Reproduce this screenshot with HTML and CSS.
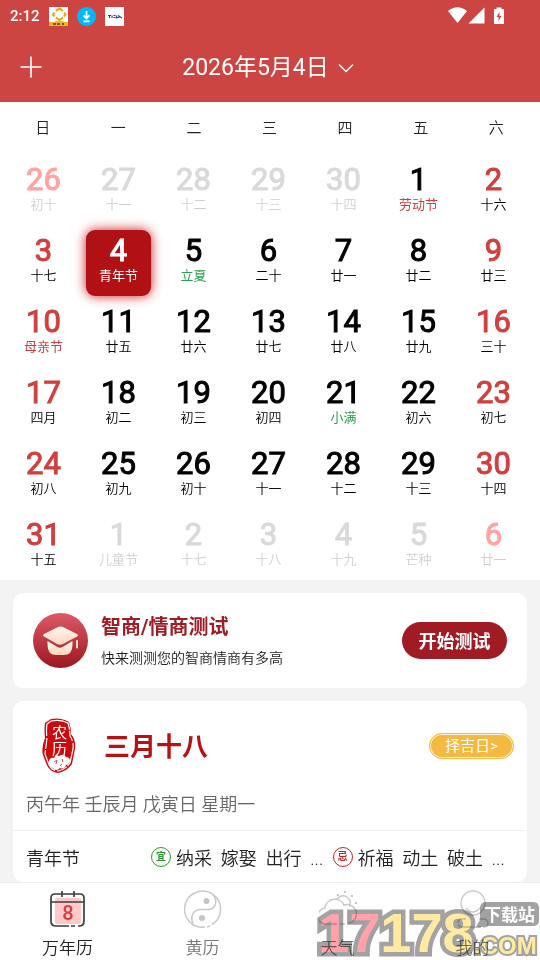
FILE: index.html
```html
<!DOCTYPE html>
<html lang="zh-CN">
<head>
<meta charset="utf-8">
<meta name="viewport" content="width=device-width, initial-scale=1">
<title>万年历</title>
<link rel="stylesheet" href="styles.css">
</head>
<body>
<div class="app">
  <header class="header">
    <div class="status">
      <span class="clock">2:12</span>
      <svg class="tray" viewBox="0 0 19 19"><rect width="19" height="19" fill="#fff"/><path d="M0 15h5l2-1h6l2 1h4v4H0z" fill="#f5b50a"/><path d="M7 4l3.500-2.500L14 4M5.500 5.500L4 7.500l1.500 2M15 5.500l1.500 2-1.500 2M7 10.500l3.500 2.500 3.500-2.500" fill="none" stroke="#eda20c" stroke-width="2"/><path d="M4 17h3M8 17h3M13 17h2" stroke="#4a3606" stroke-width="1.500"/></svg>
      <svg class="tray" viewBox="0 0 19 19"><circle cx="9.500" cy="9.500" r="9.500" fill="#00b8fb"/><path d="M9.500 4v7M6.500 8.500l3 3 3-3M6.500 14.300h6" fill="none" stroke="#fff" stroke-width="1.800"/></svg>
      <svg class="tray" viewBox="0 0 19 19"><rect width="19" height="19" fill="#fff"/><path d="M3 8.500h3M4.500 8.500v2.500M7 8.500v2.500M8.500 8.500h2M8.500 10.500h2M11.500 8.500v2.500l3-1M13 8.500l4 2.500" fill="none" stroke="#24467e" stroke-width="1.100"/></svg>
      <svg class="signals" viewBox="0 0 60 18"><path d="M0 4Q9.500-3.500 19 4L9.500 16zM20.500 16.500L36.500.5v16z" fill="#fff"/><path d="M46 2h2.500V.5h5V2H56v15H46z" fill="#fff"/><path d="M51.500 5l-3 5h2v4l3-5h-2z" fill="#cc4542"/></svg>
    </div>
    <div class="titlebar">
      <button class="add" type="button" aria-label="添加"><svg viewBox="0 0 22 22"><path d="M11 .5v21M.5 11h21" stroke="#fff" stroke-width="1.700"/></svg></button>
      <button class="month" type="button">2026年5月4日<svg viewBox="0 0 16 10"><path d="M1 1.500l7 7 7-7" fill="none" stroke="#fff" stroke-width="1.500"/></svg></button>
    </div>
  </header>
  <main>
    <section class="calendar">
      <div class="week"><span>日</span><span>一</span><span>二</span><span>三</span><span>四</span><span>五</span><span>六</span></div>
      <div class="days">
        <button class="day rest out"><b>26</b><span>初十</span></button><button class="day out"><b>27</b><span>十一</span></button><button class="day out"><b>28</b><span>十二</span></button><button class="day out"><b>29</b><span>十三</span></button><button class="day out"><b>30</b><span>十四</span></button><button class="day fest"><b>1</b><span>劳动节</span></button><button class="day rest"><b>2</b><span>十六</span></button>
        <button class="day rest"><b>3</b><span>十七</span></button><button class="day selected" aria-pressed="true"><b>4</b><span>青年节</span></button><button class="day term"><b>5</b><span>立夏</span></button><button class="day"><b>6</b><span>二十</span></button><button class="day"><b>7</b><span>廿一</span></button><button class="day"><b>8</b><span>廿二</span></button><button class="day rest"><b>9</b><span>廿三</span></button>
        <button class="day rest fest"><b>10</b><span>母亲节</span></button><button class="day"><b>11</b><span>廿五</span></button><button class="day"><b>12</b><span>廿六</span></button><button class="day"><b>13</b><span>廿七</span></button><button class="day"><b>14</b><span>廿八</span></button><button class="day"><b>15</b><span>廿九</span></button><button class="day rest"><b>16</b><span>三十</span></button>
        <button class="day rest"><b>17</b><span>四月</span></button><button class="day"><b>18</b><span>初二</span></button><button class="day"><b>19</b><span>初三</span></button><button class="day"><b>20</b><span>初四</span></button><button class="day term"><b>21</b><span>小满</span></button><button class="day"><b>22</b><span>初六</span></button><button class="day rest"><b>23</b><span>初七</span></button>
        <button class="day rest"><b>24</b><span>初八</span></button><button class="day"><b>25</b><span>初九</span></button><button class="day"><b>26</b><span>初十</span></button><button class="day"><b>27</b><span>十一</span></button><button class="day"><b>28</b><span>十二</span></button><button class="day"><b>29</b><span>十三</span></button><button class="day rest"><b>30</b><span>十四</span></button>
        <button class="day rest"><b>31</b><span>十五</span></button><button class="day out"><b>1</b><span>儿童节</span></button><button class="day out"><b>2</b><span>十七</span></button><button class="day out"><b>3</b><span>十八</span></button><button class="day out"><b>4</b><span>十九</span></button><button class="day out"><b>5</b><span>芒种</span></button><button class="day rest out"><b>6</b><span>廿一</span></button>
      </div>
    </section>
    <div class="feed">
      <section class="card quiz">
        <svg class="cap" viewBox="0 0 55 55"><defs><linearGradient id="disc" x2="0" y2="1"><stop stop-color="#dd5b66"/><stop offset="1" stop-color="#9b1620"/></linearGradient><linearGradient id="cream" x2="0" y2="1"><stop stop-color="#fff8f2"/><stop offset="1" stop-color="#ffd5ba"/></linearGradient></defs><circle cx="27.500" cy="27.500" r="27.500" fill="url(#disc)"/><path d="M14.500 28v4q0 10 9 10h7q9 0 9-10v-4l-10 6q-2.500 1.500-5 0z" fill="url(#cream)"/><path d="M11 21L25 14q2.500-1 5 0l14 7q2 1 0 2.500L30 31q-3 1.500-6 0l-13-7.500q-2-1.500 0-2.500z" fill="url(#cream)"/><path d="M44 28v6.500" stroke="#ffe0cb" stroke-width="2" stroke-linecap="round"/></svg>
        <div class="quiz-text"><h2>智商/情商测试</h2><p>快来测测您的智商情商有多高</p></div>
        <button class="start" type="button">开始测试</button>
      </section>
      <section class="card almanac">
        <div class="lunar">
          <svg class="stamp" viewBox="0 0 34 56"><path d="M9 1Q19-1 27 4q2 5 2 12 5 6 4 15l-3 15q-6 8-14 9-9-1-12-10l-3-8Q-1 30 3 20 2 12 3 5z" fill="#cc0a0d"/><path d="M9 3Q19 1 26 5q2 7 2 13 4 6 3 13l-3 14q-5 7-12 8-8-1-10-9l-3-8 2-16q-1-8 0-14z" fill="none" stroke="#fff" stroke-width="1.200" stroke-dasharray="24 1 11 2"/><path d="M7 43q1-4 5-3 1-4 5-2 5-3 7 1 4 0 4 4-1 4-4 4-2 5-6 3-4 4-7 0-5-1-4-7z" fill="#fff"/><path d="M12 44l3-2-1 4M20 41l1 3M18 48l2-2" fill="none" stroke="#d94a49" stroke-width="1"/><text x="17.500" y="20">农</text><text x="17.500" y="36">历</text></svg>
          <h2>三月十八</h2>
          <button class="pick" type="button">择吉日&gt;</button>
        </div>
        <p class="ganzhi">丙午年 壬辰月 戊寅日 星期一</p>
        <div class="advice">
          <span class="festival">青年节</span>
          <span class="badge good">宜</span><span class="list">纳采&nbsp; 嫁娶&nbsp; 出行&nbsp; ...</span>
          <span class="badge bad">忌</span><span class="list">祈福&nbsp; 动土&nbsp; 破土&nbsp; ...</span>
        </div>
      </section>
    </div>
  </main>
  <nav class="tabs">
    <a href="#calendar" class="active"><svg viewBox="0 0 38 38"><rect x="6" y="8" width="26" height="26" rx="2" fill="#ffc9c9"/><path d="M20 36H7q-5 0-5-5V8q0-4 4-4h25q4 0 4 4v23q0 5-5 5h-1M22 36h4M2 12h33M13 1v6M25 1v6" fill="none" stroke="#3d3d40" stroke-width="1.700"/><text class="eight" x="19" y="30">8</text></svg>万年历</a>
    <a href="#almanac"><svg viewBox="0 0 38 38"><path d="M21 37A18 18 0 1 1 28 34.500M23 37l3-1M29 4.500c5 6 3 15-5 15h-7C9 19 6 27 9 33.500" fill="none" stroke="#c9c9c9" stroke-width="1.500"/><circle cx="22.500" cy="11" r="3" fill="#c4c4c4"/><circle cx="18" cy="28" r="3" fill="#c4c4c4"/></svg>黄历</a>
    <a href="#weather"><svg viewBox="0 0 38 38"><path d="M18 34H8a8 8 0 0 1-2-16 10 10 0 0 1 19-3 9 9 0 0 1 6 18h-2M21 34h5M18 9a7 7 0 1 1 12 8" fill="none" stroke="#c9c9c9" stroke-width="1.500"/><path d="M18 5h2M25 2h2M32 6h2M36 13h2" stroke="#c4c4c4" stroke-width="2"/></svg>天气</a>
    <a href="#mine"><svg viewBox="0 0 38 38"><circle cx="19" cy="13" r="12" fill="none" stroke="#c9c9c9" stroke-width="1.500"/><path d="M12 18q7 8 14 0M12 29H8q-4 0-4 4t4 4h13M24 37h3M29 37q5 0 5-4t-5-4h-4" fill="none" stroke="#c9c9c9" stroke-width="1.500"/></svg>我的</a>
    <svg class="watermark" viewBox="0 0 226 64" aria-hidden="true"><text x="4" y="56"><tspan class="pink">17</tspan><tspan>178</tspan></text><text class="com" x="160" y="58">.COM</text><path d="M172 6h47q6 0 6 6v12q0 6-6 6h-45l-13 2 5-8V12q0-6 6-6z" fill="#8b8b8b"/><text class="site" x="170" y="25">下载站</text></svg>
  </nav>
</div>
</body>
</html>
```

FILE: styles.css
```css
* { box-sizing: border-box; }
body { margin: 0; font-family: Roboto, "Noto Sans CJK SC", sans-serif; font-weight: 350; color: #222; background: #f3f3f3; }
button { border: 0; padding: 0; background: none; color: inherit; font: inherit; }
h2, p { margin: 0; }
svg { display: block; flex: none; }
.app { min-height: 100vh; display: flex; flex-direction: column; }
main { flex: 1; }

.header { background: #cc4542; color: #fff; }
.status { display: flex; align-items: center; height: 32px; padding: 0 32px 0 10px; gap: 9px; }
.clock { font-size: 15px; font-weight: 500; }
.tray { width: 19px; height: 19px; }
.signals { width: 60px; height: 18px; margin-left: auto; }
.titlebar { display: grid; grid-template-columns: 40px 1fr 44px; align-items: center; height: 70px; padding: 0 11px; }
.add svg { width: 22px; height: 22px; margin: 0 auto; }
.month { display: flex; align-items: center; justify-content: center; gap: 9px; padding-top: 2px; font-size: 23px; line-height: 32px; font-weight: 400; }
.month svg { width: 16px; height: 10px; }

.calendar { background: #fff; }
.week { display: grid; grid-template-columns: repeat(7, 1fr); padding: 15px 6px 20px 5px; text-align: center; font-size: 15px; line-height: 22px; }
.days { display: grid; grid-template-columns: repeat(7, 1fr); gap: 5px 10px; padding: 0 14px 0 11px; }
.day { display: flex; flex-direction: column; align-items: center; height: 66px; padding-top: 5px; border-radius: 9px; color: #000; }
.day b { font-size: 31px; line-height: 32px; font-weight: 400; -webkit-text-stroke: 1px; }
.day span { font-size: 13px; line-height: 18px; white-space: nowrap; }
.rest b, .fest span { color: #cf4040; }
.fest span, .selected span, .term span { font-weight: 400; }
.term span { color: #2ba04f; }
.out b { color: #d9d9d9; }
.out span { color: #cfcfcf; }
.rest.out b { color: #ffa3a3; }
.selected { background: #b11114; color: #fff; box-shadow: 0 0 12px #c8191c; }

.feed { display: grid; gap: 13px; padding: 13px 13px 0; }
.card { background: #fff; border-radius: 10px; }
.quiz { display: flex; align-items: center; height: 95px; padding: 0 20px; gap: 13px; }
.cap { width: 55px; height: 55px; }
.quiz-text { flex: 1; }
.quiz h2 { color: #a01c25; font-size: 20px; line-height: 30px; font-weight: 700; }
.quiz p { margin-top: 5px; font-size: 14px; line-height: 22px; }
.start { width: 105px; height: 37px; padding-bottom: 2px; border-radius: 19px; background: #a11b25; color: #fff; font-size: 18px; font-weight: 700; }
.lunar { display: flex; align-items: center; height: 90px; padding: 0 13px 0 29px; }
.stamp { width: 34px; height: 56px; }
.stamp text { fill: #fff; font-size: 15px; font-weight: 400; text-anchor: middle; }
.lunar h2 { flex: 1; margin-left: 28px; padding-top: 2px; color: #b51216; font-size: 26px; line-height: 36px; font-weight: 700; }
.pick { width: 85px; height: 26px; border: 1px solid #f3b940; border-radius: 13px; background: #f3b940; box-shadow: inset 0 0 0 1px #fff5d9; color: #fff; font-size: 15px; line-height: 22px; font-weight: 400; }
.ganzhi { padding: 0 13px 12px; color: #666; font-size: 18px; line-height: 27px; }
.advice { display: grid; grid-template-columns: 125px 20px 1fr 20px 1fr; align-items: center; height: 52px; padding: 0 13px; border-top: 1px solid #efefef; font-size: 18px; }
.list { padding-left: 5px; white-space: nowrap; }
.badge { width: 20px; height: 20px; border: 1px solid; border-radius: 50%; font-size: 10px; line-height: 18px; font-weight: 700; text-align: center; }
.good { color: #2a9b2a; }
.bad { color: #b9272b; }

.tabs { position: relative; display: grid; grid-template-columns: repeat(4, 1fr); height: 78px; border-top: 1px solid #ededed; background: #fff; }
.tabs a { display: flex; flex-direction: column; align-items: center; padding-top: 7px; color: #777; font-size: 17px; line-height: 24px; text-decoration: none; }
.tabs a svg { width: 38px; height: 38px; margin-bottom: 8px; }
.tabs .active { color: #222; }
.eight { fill: #d63e3e; font-size: 20px; font-weight: 500; text-anchor: middle; }
.watermark { position: absolute; right: 0; bottom: 0; width: 226px; height: 64px; opacity: .8; mix-blend-mode: multiply; pointer-events: none; }
.watermark text { paint-order: stroke; stroke: #8b8b8b; stroke-width: 9px; fill: #ffe58a; font-family: "Liberation Sans", sans-serif; font-size: 56px; font-weight: 700; }
.watermark .pink { fill: #ff8b95; }
.watermark .com { font-size: 24px; stroke-width: 4px; }
.watermark .site { font-family: "Noto Sans CJK SC", sans-serif; font-size: 17px; fill: #fff; stroke: none; }
```
